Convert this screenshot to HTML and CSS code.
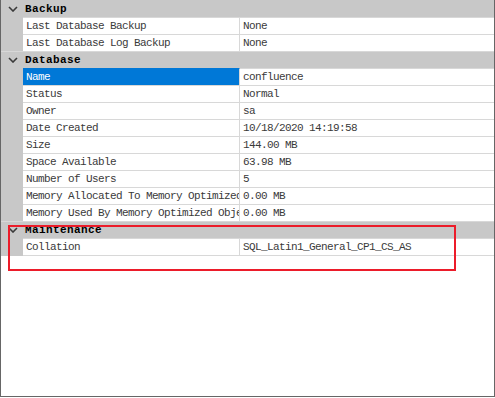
FILE: index.html
```html
<!DOCTYPE html>
<html>
<head>
<meta charset="utf-8">
<link rel="stylesheet" href="styles.css">
</head>
<body>
<div class="frame">
  <div class="grid">
    <div class="header first">
      <span class="chev"><svg width="10" height="6" viewBox="0 0 10 6"><path d="M1 1 L5 5 L9 1" fill="none" stroke="#3a3a3a" stroke-width="1.6"/></svg></span>
      <span class="htext">Backup</span>
    </div>
    <div class="row"><span class="gut"></span><span class="name">Last Database Backup</span><span class="val">None</span></div>
    <div class="row"><span class="gut"></span><span class="name">Last Database Log Backup</span><span class="val">None</span></div>

    <div class="header">
      <span class="chev"><svg width="10" height="6" viewBox="0 0 10 6"><path d="M1 1 L5 5 L9 1" fill="none" stroke="#3a3a3a" stroke-width="1.6"/></svg></span>
      <span class="htext">Database</span>
    </div>
    <div class="row"><span class="gut"></span><span class="name selected">Name</span><span class="val">confluence</span></div>
    <div class="row"><span class="gut"></span><span class="name">Status</span><span class="val">Normal</span></div>
    <div class="row"><span class="gut"></span><span class="name">Owner</span><span class="val">sa</span></div>
    <div class="row"><span class="gut"></span><span class="name">Date Created</span><span class="val">10/18/2020 14:19:58</span></div>
    <div class="row"><span class="gut"></span><span class="name">Size</span><span class="val">144.00 MB</span></div>
    <div class="row"><span class="gut"></span><span class="name">Space Available</span><span class="val">63.98 MB</span></div>
    <div class="row"><span class="gut"></span><span class="name">Number of Users</span><span class="val">5</span></div>
    <div class="row"><span class="gut"></span><span class="name">Memory Allocated To Memory Optimized Objects</span><span class="val">0.00 MB</span></div>
    <div class="row"><span class="gut"></span><span class="name">Memory Used By Memory Optimized Objects</span><span class="val">0.00 MB</span></div>

    <div class="header">
      <span class="chev"><svg width="10" height="6" viewBox="0 0 10 6"><path d="M1 1 L5 5 L9 1" fill="none" stroke="#3a3a3a" stroke-width="1.6"/></svg></span>
      <span class="htext">Maintenance</span>
    </div>
    <div class="row last"><span class="gut"></span><span class="name">Collation</span><span class="val">SQL_Latin1_General_CP1_CS_AS</span></div>
  </div>
  <div class="highlight"></div>
</div>
</body>
</html>
```

FILE: styles.css
```css
html, body {
  margin: 0;
  padding: 0;
  background: #ffffff;
}

.frame {
  position: relative;
  box-sizing: border-box;
  width: 495px;
  height: 397px;
  border-left: 1px solid #666666;
  border-right: 1px solid #666666;
  border-bottom: 1px solid #666666;
  background: #ffffff;
  overflow: hidden;
  font-family: "Liberation Mono", "DejaVu Sans Mono", monospace;
  font-size: 11px;
  letter-spacing: -0.6px;
  color: #3a3a3a;
}

.grid {
  display: flex;
  flex-direction: column;
}

.header {
  display: flex;
  align-items: center;
  height: 16px;
  background: #c8c8c8;
  border-top: 1px solid #d8d8d8;
}

.header.first {
  height: 17px;
  border-top: none;
}

.chev {
  display: flex;
  align-items: center;
  justify-content: center;
  width: 22px;
  flex: none;
  padding-left: 1px;
  box-sizing: border-box;
}

.chev svg {
  display: block;
}

.htext {
  padding-left: 2px;
  font-weight: bold;
  letter-spacing: 0.4px;
  color: #000000;
  line-height: 16px;
}

.row {
  display: flex;
  height: 17px;
}

.row.last {
  height: 18px;
}

.gut {
  width: 22px;
  flex: none;
  background: #c8c8c8;
}

.name {
  box-sizing: border-box;
  width: 217px;
  flex: none;
  padding-left: 3px;
  padding-top: 1px;
  border-top: 1px solid #d8d8d8;
  border-right: 1px solid #d8d8d8;
  line-height: 15px;
  white-space: nowrap;
  overflow: hidden;
  background: #ffffff;
}

.row.last .name,
.row.last .val {
  border-bottom: 1px solid #d8d8d8;
}

.name.selected {
  background: #0078d7;
  border-top-color: #0078d7;
  color: #ffffff;
}

.val {
  box-sizing: border-box;
  flex: 1;
  padding-left: 3px;
  padding-top: 1px;
  border-top: 1px solid #d8d8d8;
  line-height: 15px;
  white-space: nowrap;
  overflow: hidden;
  background: #ffffff;
}

.highlight {
  position: absolute;
  left: 7px;
  top: 225px;
  width: 448px;
  height: 46px;
  box-sizing: border-box;
  border: 2px solid #ec1c2a;
}
```
